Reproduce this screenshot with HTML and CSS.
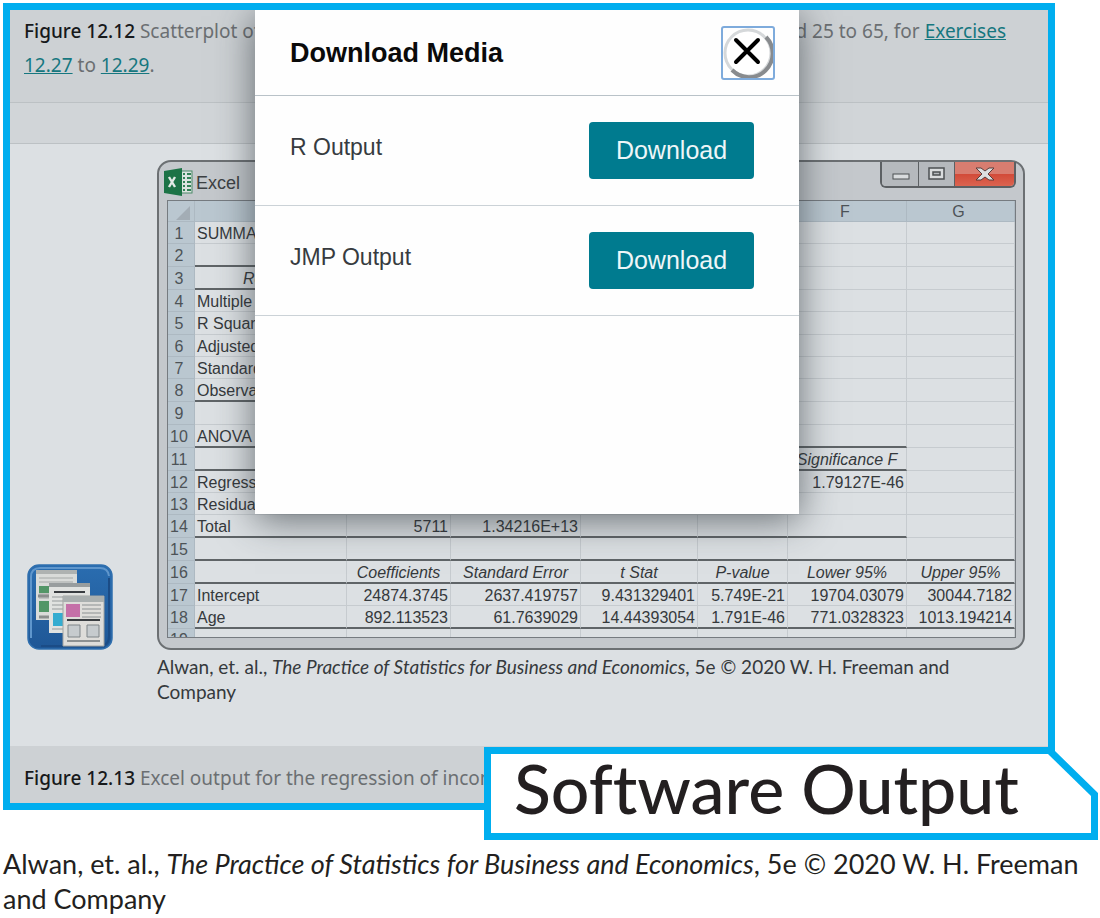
FILE: index.html
```html
<!DOCTYPE html>
<html lang="en">
<head>
<meta charset="utf-8">
<title>Software Output</title>
<link rel="stylesheet" href="styles.css">
</head>
<body>
<main class="stage">
  <div class="screen">
    <div class="caption caption-top">
      <div class="caption-line"><span><b>Figure 12.12</b> Scatterplot of</span><span>aged 25 to 65, for <a href="#ex">Exercises</a></span></div>
      <div><a href="#ex27">12.27</a> to <a href="#ex29">12.29</a>.</div>
    </div>
    <div class="band"></div>
    <div class="figure">
      <button class="media" type="button" aria-label="Media">
        <svg viewBox="0 0 86 86" width="86" height="86">
          <defs><linearGradient id="b" x1="0" y1="0" x2="0" y2="1"><stop offset="0" stop-color="#2a6db0"/><stop offset="1" stop-color="#1f5796"/></linearGradient></defs>
          <rect x="1" y="1" width="84" height="84" rx="11" fill="url(#b)" stroke="#2f6fae" stroke-width="1.5"/>
          <path d="M4 74V13Q4 4 13 4H73Q81 4 82 12" fill="none" stroke="#5f96cc" stroke-width="2"/>
          <path d="M82 14V72Q82 82 72 82H14" fill="none" stroke="#1b4c86" stroke-width="2"/>
          <path d="M9 6H50V56H9Z" fill="#d9dbd9"/><path d="M9 6H50V10H9Z" fill="#aeb2b1"/>
          <path d="M12 14H46M12 18H46M12 30H22M12 34H22" stroke="#a4a8a7"/>
          <path d="M12 22H24V29H12ZM12 37H24V48H12Z" fill="#529667"/><path d="M11 32H24M12 53H24" stroke="#8a8e8d" stroke-width="3"/>
          <path d="M22 19H63V69H22Z" fill="#e0e2e0"/><path d="M22 19H63V23H22Z" fill="#989d9e"/>
          <path d="M27 28H58" stroke="#383c40" stroke-width="2"/><path d="M25 33H38M25 37H38M25 41H38M25 45H38M25 65H38" stroke="#969b9c"/>
          <path d="M26 49H38V62H26Z" fill="#34acd0"/>
          <path d="M36 32H77V82H36Z" fill="#deddda" stroke="#a3a4a1"/><path d="M36 32H77V38H36Z" fill="#a9afaf"/>
          <path d="M39 40H53V53H39Z" fill="#c570a8"/><path d="M55 41H74M55 45H74M55 49H74M55 53H74" stroke="#8b9092"/>
          <path d="M40 56H73" stroke="#3a3e42" stroke-width="2"/><path d="M41 61H53V73H41ZM60 61H72V73H60Z" fill="#c6cbce" stroke="#7e8589"/><path d="M40 77H73" stroke="#8c9091" stroke-width="2"/>
        </svg>
      </button>
      <div class="window">
        <div class="titlebar">
          <svg class="excel" viewBox="0 0 30 28" width="30" height="28"><rect x="15" y="3" width="13" height="22" fill="#dce4e0" stroke="#4b8a68"/><path d="M19 6H21M23 6H27M19 10H21M23 10H27M19 14H21M23 14H27M19 18H21M23 18H27M19 22H21M23 22H27" stroke="#338257" stroke-width="2"/><path d="M0 3L18 0V28L0 25Z" fill="#1c7346"/><path d="M5 9L11 19M11 9L5 19" stroke="#e2eae6" stroke-width="2.4"/></svg>
          <span>Excel</span>
          <div class="winbtns">
            <button type="button" aria-label="Minimize"><svg width="20" height="14"><rect x="3" y="7" width="16" height="5" fill="#d9dcde" stroke="#4c5053"/></svg></button>
            <button type="button" aria-label="Maximize"><svg width="20" height="14"><rect x="2" y="1" width="15" height="11" fill="#d9dcde" stroke="#4c5053" stroke-width="1.5"/><rect x="6" y="5" width="7" height="3" fill="#b5b9bd" stroke="#4c5053" stroke-width="1.5"/></svg></button>
            <button type="button" class="red" aria-label="Close window"><svg width="22" height="14"><path d="M2 1H7L11 4L15 1H20L14 7L20 13H15L11 10L7 13H2L8 7Z" fill="#dde0e0" stroke="#593f3c"/></svg></button>
          </div>
        </div>
        <table class="sheet">
          <colgroup><col class="c0"><col class="ca"><col class="cb"><col class="cc"><col class="cd"><col class="ce"><col class="cf"><col></colgroup>
          <thead><tr><th><svg width="14" height="14"><path d="M14 0V14H0Z" fill="#a3adb5"/></svg></th><th></th><th></th><th></th><th></th><th></th><th>F</th><th>G</th></tr></thead>
          <tbody>
            <tr class="s"><th>1</th><td>SUMMARY</td><td></td><td></td><td></td><td></td><td></td><td></td></tr>
            <tr><th>2</th><td class="k"></td><td class="k"></td><td></td><td></td><td></td><td></td><td></td></tr>
            <tr><th>3</th><td class="k stat"><i>Regression</i></td><td class="k"></td><td></td><td></td><td></td><td></td><td></td></tr>
            <tr class="s"><th>4</th><td>Multiple R</td><td></td><td></td><td></td><td></td><td></td><td></td></tr>
            <tr><th>5</th><td>R Square</td><td></td><td></td><td></td><td></td><td></td><td></td></tr>
            <tr class="s"><th>6</th><td>Adjusted R</td><td></td><td></td><td></td><td></td><td></td><td></td></tr>
            <tr class="s"><th>7</th><td>Standard</td><td></td><td></td><td></td><td></td><td></td><td></td></tr>
            <tr><th>8</th><td class="k">Observations</td><td class="k"></td><td></td><td></td><td></td><td></td><td></td></tr>
            <tr><th>9</th><td></td><td></td><td></td><td></td><td></td><td></td><td></td></tr>
            <tr><th>10</th><td class="k">ANOVA</td><td class="k"></td><td class="k"></td><td class="k"></td><td class="k"></td><td class="k"></td><td></td></tr>
            <tr class="it"><th>11</th><td class="k"></td><td class="k"></td><td class="k"></td><td class="k"></td><td class="k"></td><td class="k">Significance F</td><td></td></tr>
            <tr class="s"><th>12</th><td>Regression</td><td></td><td></td><td></td><td></td><td>1.79127E-46</td><td></td></tr>
            <tr class="s"><th>13</th><td>Residual</td><td></td><td></td><td></td><td></td><td></td><td></td></tr>
            <tr><th>14</th><td class="k">Total</td><td class="k">5711</td><td class="k">1.34216E+13</td><td class="k"></td><td class="k"></td><td class="k"></td><td></td></tr>
            <tr class="kk"><th>15</th><td></td><td></td><td></td><td></td><td></td><td></td><td></td></tr>
            <tr class="kk it"><th>16</th><td></td><td>Coefficients</td><td>Standard Error</td><td>t Stat</td><td>P-value</td><td>Lower 95%</td><td>Upper 95%</td></tr>
            <tr class="s"><th>17</th><td>Intercept</td><td>24874.3745</td><td>2637.419757</td><td>9.431329401</td><td>5.749E-21</td><td>19704.03079</td><td>30044.7182</td></tr>
            <tr class="kk"><th>18</th><td>Age</td><td>892.113523</td><td>61.7639029</td><td>14.44393054</td><td>1.791E-46</td><td>771.0328323</td><td>1013.194214</td></tr>
            <tr class="cut"><th><div>19</div></th><td></td><td></td><td></td><td></td><td></td><td></td><td></td></tr>
          </tbody>
        </table>
      </div>
      <p class="credit">Alwan, et. al., <i>The Practice of Statistics for Business and Economics</i>, 5e © 2020 W. H. Freeman and Company</p>
    </div>
    <div class="caption caption-bottom"><b>Figure 12.13</b> Excel output for the regression of income</div>

    <section class="modal" role="dialog" aria-labelledby="mt">
      <header><h2 id="mt">Download Media</h2>
        <button class="close" type="button" aria-label="Close"><svg viewBox="0 0 50 50" width="50" height="50"><circle cx="25" cy="25" r="23" fill="#fff" stroke="#d5d8da" stroke-width="3"/><path d="M43 9A23 23 0 0 1 9 42" fill="none" stroke="#888b8e" stroke-width="4"/><path d="M13 12L35 34M35 12L13 34" stroke="#000" stroke-width="4" stroke-linecap="round"/></svg></button>
      </header>
      <div class="item"><span>R Output</span><button type="button">Download</button></div>
      <div class="item"><span>JMP Output</span><button type="button">Download</button></div>
    </section>
  </div>
  <div class="tag"><h1>Software Output</h1></div>
</main>
<p class="footer">Alwan, et. al., <i>The Practice of Statistics for Business and Economics</i>, 5e © 2020 W. H. Freeman and Company</p>
</body>
</html>
```
FILE: styles.css
```css
* { box-sizing: border-box; }
body { margin: 0; background: #fff; color: #231f20; font-family: "Noto Sans", sans-serif; }
p, h1, h2 { margin: 0; }
button { margin: 0; padding: 0; border: 0; background: none; font-family: inherit; }
svg { display: block; }

.stage { position: relative; margin: 3px 45px 0 3px; }
.screen { position: relative; overflow: hidden; border: 7px solid #00aeef; background: #dce0e3; }

.caption { padding: 0 14px; background: #cdd1d4; color: #6b6f72; font-size: 19px; line-height: 34px; }
.caption b { color: #17191b; font-weight: 500; }
.caption a { color: #16777f; }
.caption-top { padding-top: 4px; height: 93px; border-bottom: 1px solid #bcc1c4; }
.caption-line { display: flex; justify-content: space-between; padding-right: 28px; white-space: nowrap; }
.caption-bottom { padding-top: 15px; height: 57px; white-space: nowrap; }
.band { height: 41px; background: #d1d5d8; border-bottom: 1px solid #bcc1c4; }

.figure { display: grid; grid-template-columns: 86px 1fr; column-gap: 44px; row-gap: 4px; align-items: end; padding: 16px 23px 42px 17px; }
.credit { grid-column: 2; color: #35393c; font: 19px/25px Lato, sans-serif; }

.window { border: 2px solid #6c7073; border-radius: 14px; background: #c4c8cc; padding: 0 7px 10px 8px; }
.titlebar { display: flex; align-items: flex-start; height: 38px; color: #3c4043; font: 18px/22px "Liberation Sans", Arial, sans-serif; }
.titlebar .excel { margin: 6px 2px 0 -3px; }
.titlebar span { margin-top: 10px; }
.winbtns { display: flex; margin-left: auto; border: 2px solid #5c6063; border-top: 0; border-radius: 0 0 6px 6px; overflow: hidden; }
.winbtns button { display: grid; place-items: center; width: 36px; height: 24px; background: #b5b9bd; }
.winbtns button + button { border-left: 1px solid #5c6063; }
.winbtns .red { width: 60px; background: linear-gradient(#d87d70 50%, #d24a38 50%, #db6450); }

.sheet { width: 100%; table-layout: fixed; border-collapse: separate; border-spacing: 0; border: 1px solid #767b80; background: #dce0e3; color: #35393c; font: 16px/19px "Liberation Sans", Arial, sans-serif; }
.c0 { width: 27px; } .ca { width: 152px; } .cb { width: 104px; } .cc { width: 130px; }
.cd { width: 117px; } .ce { width: 90px; } .cf { width: 119px; }
.sheet th, .sheet td { height: 23px; padding: 1px 2px 0; border: 0 solid #c6cbcf; border-width: 0 1px 1px 0; white-space: nowrap; overflow: hidden; text-align: right; }
.sheet thead th { height: 21px; text-align: center; background: #bac7d0; }
.sheet thead svg { margin: 3px 0 0 8px; }
.sheet th { padding: 1px 4px 0 0; background: #bac7d0; border-color: #adb9c2; color: #4d5357; font-weight: 400; text-align: center; }
.sheet .s th, .sheet .s td { height: 22px; }
.sheet td:nth-child(2) { text-align: left; }
.sheet td.stat { padding-left: 48px; }
.sheet .k, .sheet .kk td { border-bottom: 2px solid #5f6467; }
.sheet .it td { font-style: italic; text-align: center; }
.sheet .cut th, .sheet .cut td { height: 8px; padding-top: 0; border-bottom: 0; }
.sheet .cut div { height: 8px; overflow: hidden; line-height: 21px; }

.modal { position: absolute; top: 0; left: 245px; right: 249px; height: 504px; background: #fefefe; box-shadow: 0 6px 36px rgba(40, 48, 54, .65); font-family: "Liberation Sans", Arial, sans-serif; }
.modal header { display: flex; align-items: center; justify-content: space-between; height: 86px; padding: 0 24px 0 35px; border-bottom: 1px solid #b9c2c8; }
.modal h2 { color: #0a0a0a; font-size: 27px; line-height: 32px; }
.close { display: grid; place-items: center; width: 54px; height: 54px; border: 2px solid #7eabdc; border-radius: 3px; }
.item { display: flex; align-items: center; justify-content: space-between; height: 110px; padding: 0 45px 0 35px; border-bottom: 1px solid #cbd2d7; color: #373b40; font-size: 23px; }
.item span { padding-bottom: 6px; }
.item button { width: 165px; height: 57px; border-radius: 4px; background: #007b8f; color: #eef6f8; font-size: 25px; }

.tag { position: absolute; right: -43px; bottom: -30px; width: 614px; height: 93px; padding: 7px; background: #00aeef; clip-path: polygon(0 0, calc(100% - 43px) 0, calc(100% - 43px) 4px, 100% 46px, 100% 100%, 0 100%); }
.tag h1 { height: 79px; padding-left: 23px; background: #fff; color: #231f20; font: 500 68px/68px Lato, sans-serif; font-variant-ligatures: none; clip-path: polygon(0 0, calc(100% - 43px) 0, 100% 42px, 100% 100%, 0 100%); }

.footer { margin: 36px 0 0 3px; font: 27px/35px Lato, sans-serif; }
```
